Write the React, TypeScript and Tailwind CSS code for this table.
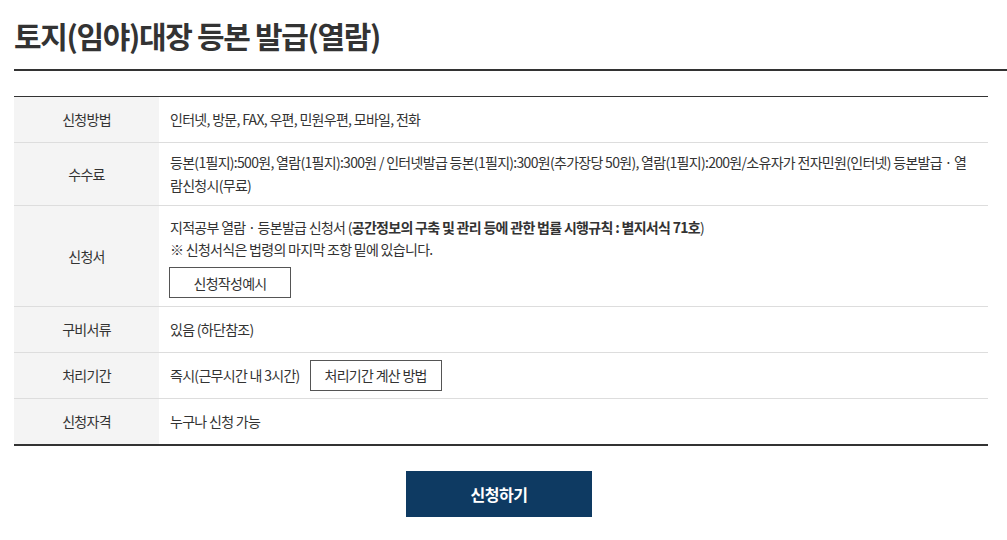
const rows = [
  { label: '신청방법', key: 'method' },
  { label: '수수료', key: 'fee' },
  { label: '신청서', key: 'form' },
  { label: '구비서류', key: 'docs' },
  { label: '처리기간', key: 'period' },
  { label: '신청자격', key: 'who' },
];

const Cell = ({ k }: { k: string }) => {
  switch (k) {
    case 'method':
      return <span>인터넷, 방문, FAX, 우편, 민원우편, 모바일, 전화</span>;
    case 'fee':
      return (
        <span>
          등본(1필지):500원, 열람(1필지):300원 / 인터넷발급 등본(1필지):300원(추가장당 50원), 열람(1필지):200원/소유자가 전자민원(인터넷) 등본발급 · 열람신청시(무료)
        </span>
      );
    case 'form':
      return (
        <div className="leading-[22px]">
          <p>
            지적공부 열람 · 등본발급 신청서 (<b className="font-bold">공간정보의 구축 및 관리 등에 관한 법률 시행규칙 : 별지서식 71호</b>)
          </p>
          <p>※ 신청서식은 법령의 마지막 조항 밑에 있습니다.</p>
          <button className="ml-[-1px] mt-[7px] h-[31px] w-[122px] border border-[#555] bg-white text-[14px] text-[#333]">
            신청작성예시
          </button>
        </div>
      );
    case 'docs':
      return <span>있음 (하단참조)</span>;
    case 'period':
      return (
        <div className="flex items-center">
          <span>즉시(근무시간 내 3시간)</span>
          <button className="ml-[10px] h-[31px] w-[132px] border border-[#555] bg-white text-[14px] text-[#333]">
            처리기간 계산 방법
          </button>
        </div>
      );
    default:
      return <span>누구나 신청 가능</span>;
  }
};

export default function App() {
  return (
    <div
      className="min-h-[540px] bg-white pl-[14px] text-[#333]"
      style={{ fontFamily: '"Noto Sans CJK KR", "Noto Sans", sans-serif' }}
    >
      <h1 className="pt-[14px] pb-[13px] text-[30px] font-bold leading-[42px] tracking-[-0.045em] text-[#333] border-b-2 border-[#333]">
        토지(임야)대장 등본 발급(열람)
      </h1>

      <div className="mt-[25px] w-[974px] border-t border-b-2 border-[#333] text-[14px] tracking-[-0.05em]">
        {rows.map((r, i) => (
          <div
            key={r.key}
            className={`flex ${i < rows.length - 1 ? 'border-b border-[#ddd]' : ''}`}
          >
            <div className="flex w-[145px] shrink-0 items-center justify-center bg-[#f4f4f4]">
              {r.label}
            </div>
            <div
              className={`flex min-h-[45px] flex-1 items-center pl-[11px] pr-[14px] leading-[23px] ${
                r.key === 'form' ? 'pt-[10px] pb-[8px]' : r.key === 'period' ? 'py-[7px]' : 'py-[8px]'
              }`}
            >
              <Cell k={r.key} />
            </div>
          </div>
        ))}
      </div>

      <div className="flex w-[974px] justify-center pt-[25px]">
        <button className="ml-[-4px] h-[46px] w-[186px] bg-[#0e3a62] text-[16px] font-bold tracking-[-0.03em] text-white">
          신청하기
        </button>
      </div>
    </div>
  );
}
